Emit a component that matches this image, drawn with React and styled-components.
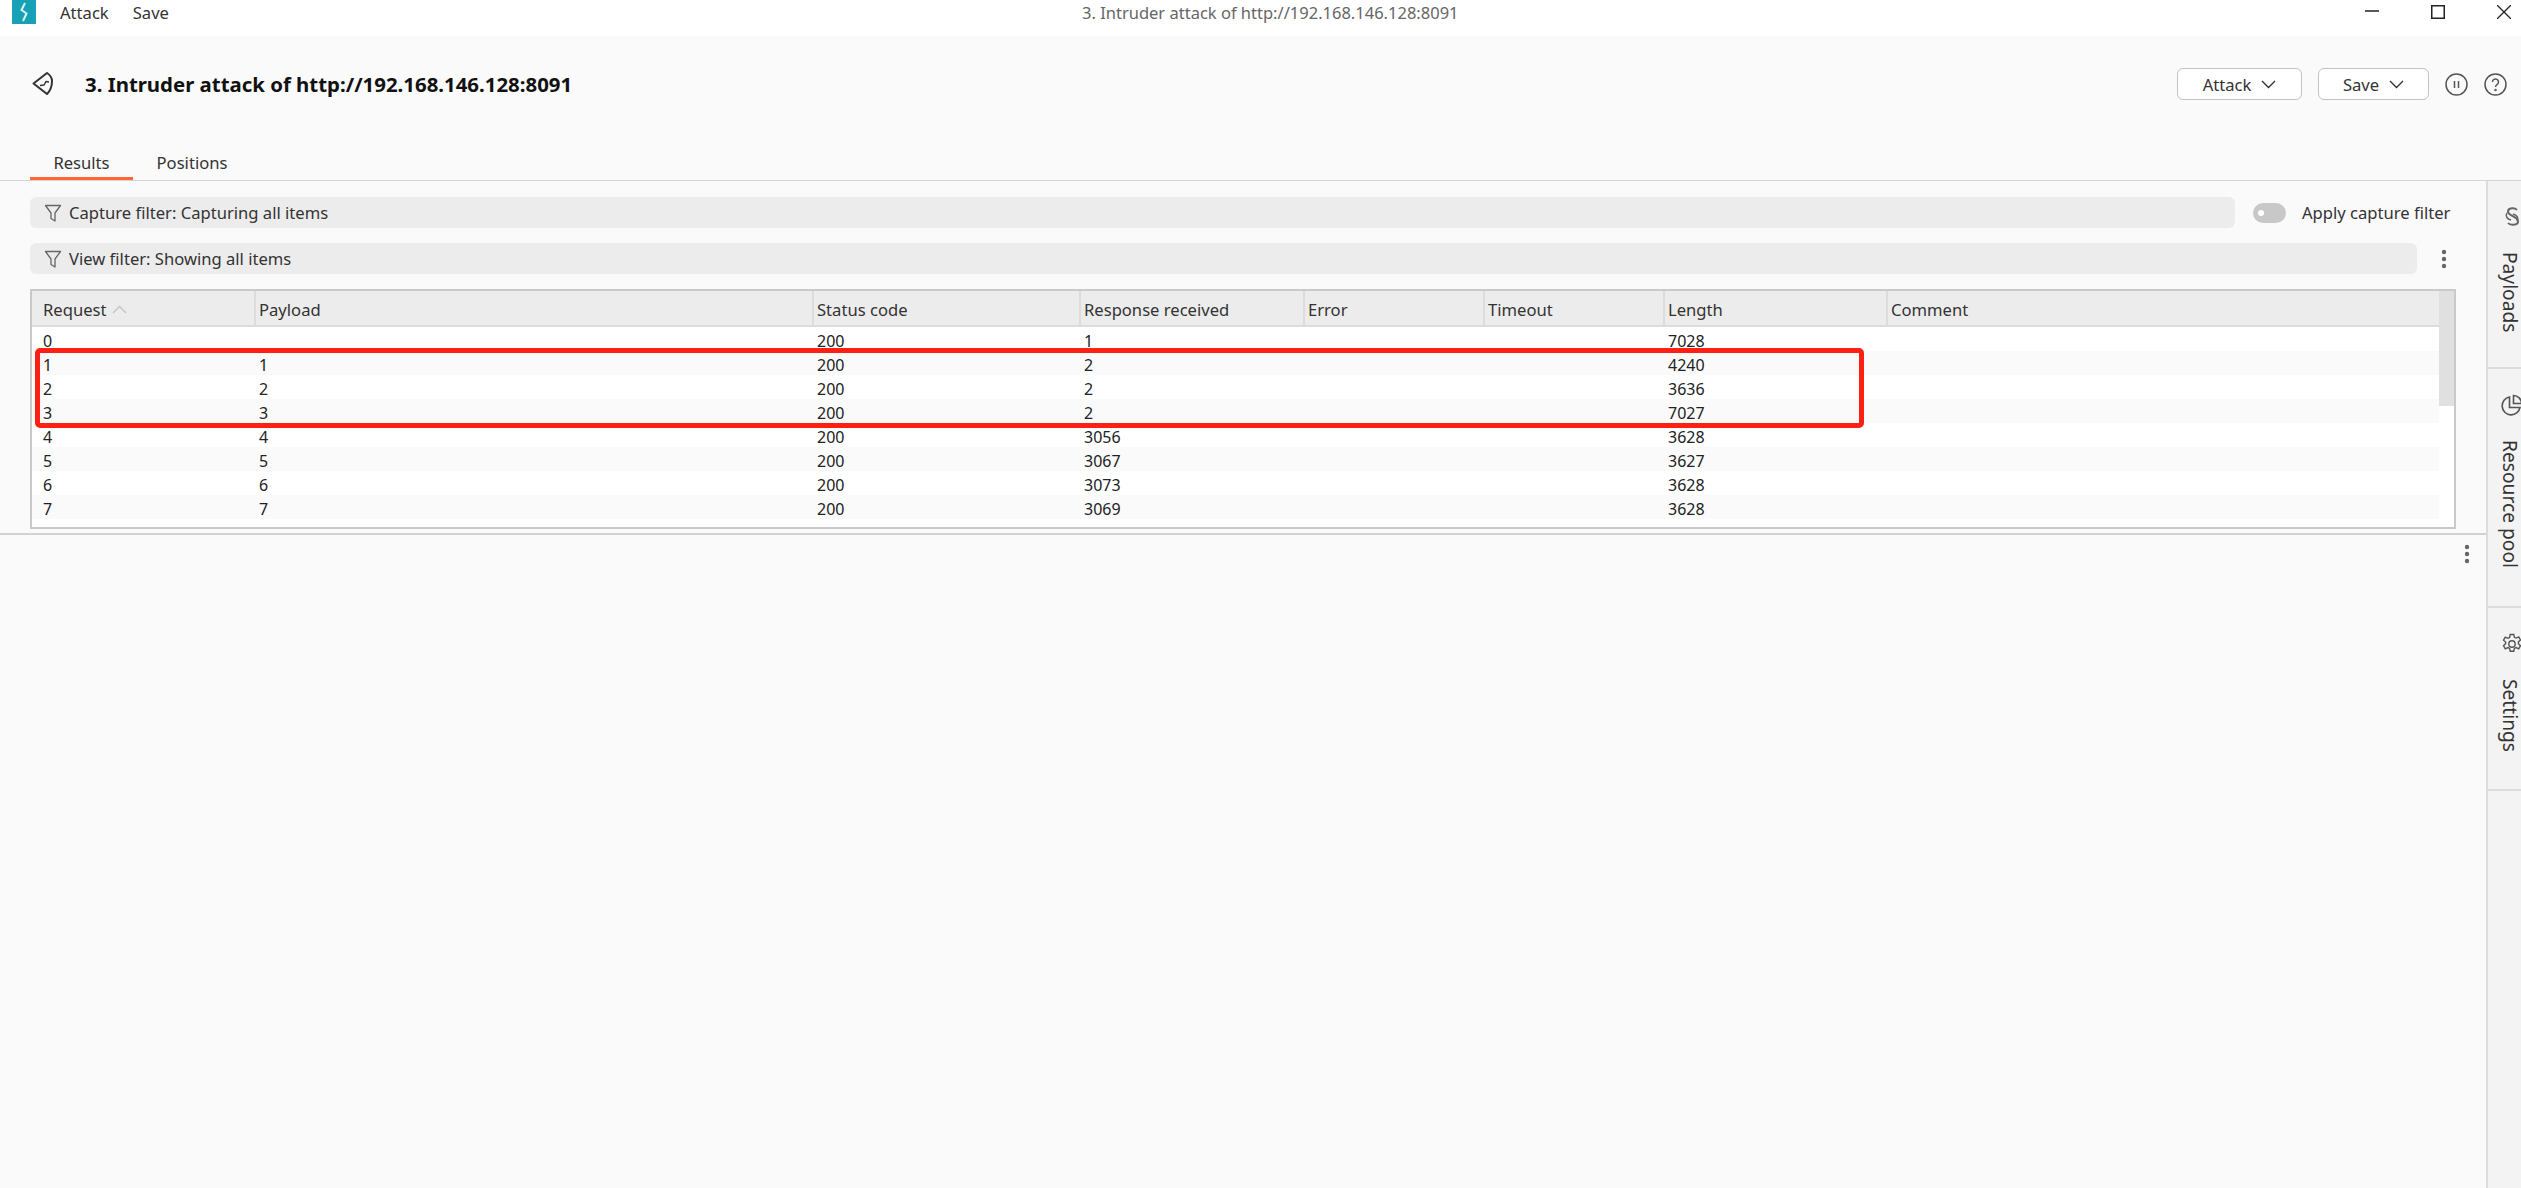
import React from "react";
import styled, { createGlobalStyle } from "styled-components";

const GlobalStyle = createGlobalStyle`
  html, body {
    margin: 0;
    padding: 0;
    background: #fafafa;
    overflow: hidden;
  }
  * {
    box-sizing: border-box;
  }
`;

const Page = styled.div`
  width: 2521px;
  height: 1188px;
  display: flex;
  flex-direction: column;
  overflow: hidden;
  font-family: "Noto Sans", "Open Sans", sans-serif;
  font-size: 16.6px;
  color: #2b2b2b;
  background: #fafafa;
`;

// window title bar
const TitleBar = styled.div`
  height: 36px;
  flex: none;
  background: #fff;
  display: flex;
  align-items: flex-start;
  position: relative;
`;
const Logo = styled.div`
  width: 24px;
  height: 24px;
  margin-left: 12px;
  background: #18a0b5;
  display: flex;
  align-items: center;
  justify-content: center;
`;
const MenuItem = styled.div`
  line-height: 26px;
  color: #333;
  margin-left: 24px;
`;
const WindowTitle = styled.div`
  position: absolute;
  left: 1082px;
  top: 0;
  line-height: 26px;
  font-size: 16.5px;
  color: #666;
`;
const WindowButtons = styled.div`
  margin-left: auto;
  display: flex;
  gap: 52px;
  padding: 5px 10px 0 0;
`;

// attack header
const Header = styled.div`
  height: 144px;
  flex: none;
  position: relative;
`;
const HeaderRow = styled.div`
  height: 32px;
  margin-top: 32px;
  display: flex;
  align-items: center;
  padding-left: 32px;
`;
const AttackTitle = styled.div`
  font-size: 20.4px;
  font-weight: 700;
  color: #111;
  margin-left: 31px;
`;
const HeaderActions = styled.div`
  margin-left: auto;
  display: flex;
  align-items: center;
  padding-right: 14px;
`;
const DropButton = styled.button`
  width: ${(p) => p.$width}px;
  height: 32px;
  margin-right: 16px;
  padding: 0;
  border: 1px solid #c4c2c2;
  border-radius: 6px;
  background: #fff;
  font: inherit;
  color: #333;
  display: flex;
  align-items: center;
  justify-content: center;
  gap: 10px;
`;
const RoundIcon = styled.div`
  width: 23px;
  height: 23px;
  margin-left: ${(p) => p.$left || 0}px;
  display: flex;
`;
const Tabs = styled.div`
  position: absolute;
  left: 30px;
  bottom: 0;
  display: flex;
`;
const Tab = styled.div`
  width: ${(p) => p.$width}px;
  height: 36px;
  line-height: 38px;
  text-align: center;
  color: #333;
  border-bottom: 3px solid ${(p) => (p.$active ? "#ff6633" : "transparent")};
`;

const Body = styled.div`
  flex: 1;
  display: flex;
  border-top: 1px solid #d4d6d6;
  min-height: 0;
`;
const Main = styled.div`
  flex: 1;
  min-width: 0;
  display: flex;
  flex-direction: column;
`;
const ResultsPanel = styled.div`
  height: 354px;
  flex: none;
  padding: 16px 30px 0;
  border-bottom: 2px solid #d2d2d2;
`;
const FilterRow = styled.div`
  height: 31px;
  display: flex;
  align-items: center;
  margin-bottom: 15px;
`;
const FilterBar = styled.div`
  flex: 1;
  height: 31px;
  padding-left: 14px;
  border-radius: 6px;
  background: #ececec;
  display: flex;
  align-items: center;
  gap: 7px;
  color: #333;
`;
const Toggle = styled.div`
  width: 33px;
  height: 20px;
  margin-left: 18px;
  border-radius: 10px;
  background: #c8c8c8;
  position: relative;
  &::after {
    content: "";
    position: absolute;
    left: 5px;
    top: 7px;
    width: 6px;
    height: 6px;
    border-radius: 50%;
    background: #fff;
  }
`;
const ToggleLabel = styled.div`
  width: 154px;
  margin-left: 16px;
  white-space: nowrap;
  color: #333;
`;
const DotsSlot = styled.div`
  width: 39px;
  flex: none;
  padding-left: 15px;
  display: flex;
  justify-content: center;
`;

// results table
const Table = styled.div`
  width: 2426px;
  height: 240px;
  margin-top: 1px;
  border: 2px solid #c9c9c9;
  background: #fff;
  position: relative;
  display: flex;
`;
const TableInner = styled.div`
  flex: 1;
  min-width: 0;
  display: flex;
  flex-direction: column;
`;
const Scrollbar = styled.div`
  width: 15px;
  flex: none;
  background: #fff;
  &::before {
    content: "";
    display: block;
    height: 115px;
    background: #e0e0e0;
  }
`;
const HeaderCells = styled.div`
  height: 36px;
  flex: none;
  display: flex;
  background: #ececec;
  border-bottom: 2px solid #dcdcdc;
`;
const HeadCell = styled.div`
  width: ${(p) => p.$width}px;
  flex: ${(p) => (p.$grow ? 1 : "none")};
  padding-left: ${(p) => (p.$first ? 11 : 3)}px;
  padding-top: 3px;
  border-right: ${(p) => (p.$grow ? "none" : "2px solid #dcdcdc")};
  display: flex;
  align-items: center;
  gap: 6px;
  color: #333;
`;
const Row = styled.div`
  height: 24px;
  flex: none;
  display: flex;
  background: ${(p) => (p.$odd ? "#fafafa" : "#fff")};
`;
const Cell = styled.div`
  width: ${(p) => p.$width}px;
  flex: none;
  padding-left: ${(p) => (p.$first ? 11 : 3)}px;
  font-size: 16px;
  line-height: 28px;
  color: #222;
`;
const Highlight = styled.div`
  position: absolute;
  left: 3px;
  top: 57px;
  width: 1829px;
  height: 80px;
  border: 5px solid #ff2015;
  border-radius: 5px;
  pointer-events: none;
`;

const LowerBar = styled.div`
  display: flex;
  justify-content: flex-end;
  padding: 9px 16px 0 0;
`;

// right side tabs
const Rail = styled.div`
  width: 35px;
  flex: none;
  border-left: 2px solid #dcdcdc;
  background: #f4f3f4;
  overflow: hidden;
  display: flex;
  flex-direction: column;
`;
const RailItem = styled.div`
  height: ${(p) => p.$height}px;
  width: 44px;
  flex: none;
  padding-top: 25px;
  border-bottom: 2px solid #dcdcdc;
  display: flex;
  flex-direction: column;
  align-items: center;
  gap: 24px;
`;
const RailIcon = styled.svg`
  flex: none;
  margin-left: 4px;
`;
const RailLabel = styled.div`
  writing-mode: vertical-rl;
  white-space: nowrap;
  font-size: 19.2px;
  line-height: 18px;
  color: #333;
`;

const columns = [224, 558, 267, 224, 180, 180, 223];

const rows = [
  ["0", "", "200", "1", "", "", "7028"],
  ["1", "1", "200", "2", "", "", "4240"],
  ["2", "2", "200", "2", "", "", "3636"],
  ["3", "3", "200", "2", "", "", "7027"],
  ["4", "4", "200", "3056", "", "", "3628"],
  ["5", "5", "200", "3067", "", "", "3627"],
  ["6", "6", "200", "3073", "", "", "3628"],
  ["7", "7", "200", "3069", "", "", "3628"],
];

const headers = ["Request", "Payload", "Status code", "Response received", "Error", "Timeout", "Length"];

function FilterIcon() {
  return (
    <svg width="18" height="20" viewBox="0 0 18 20" fill="none" stroke="#666" strokeWidth="1.3">
      <path d="M1.5 2.5h15l-5.5 7.5v8l-4-2.5v-5.5z" strokeLinejoin="round" />
    </svg>
  );
}

function Chevron({ color = "#333", up }) {
  return (
    <svg width="15" height="9" viewBox="0 0 15 9" fill="none" stroke={color} strokeWidth="1.4">
      <path d={up ? "M1 8l6.500-6.500L14 8" : "M1 1l6.500 6.500L14 1"} />
    </svg>
  );
}

function Dots() {
  return (
    <svg width="6" height="20" viewBox="0 0 6 20" fill="#666">
      <circle cx="3" cy="3" r="2.2" />
      <circle cx="3" cy="10" r="2.2" />
      <circle cx="3" cy="17" r="2.2" />
    </svg>
  );
}

export default function App() {
  return (
    <Page>
      <GlobalStyle />
      <TitleBar>
        <Logo>
          <svg width="14" height="22" viewBox="0 0 14 22" fill="none" stroke="#d8f3f6" strokeWidth="2">
            <path d="M8 2L4.500 9l5 3.500L6 20" />
          </svg>
        </Logo>
        <MenuItem>Attack</MenuItem>
        <MenuItem>Save</MenuItem>
        <WindowTitle>3. Intruder attack of http://192.168.146.128:8091</WindowTitle>
        <WindowButtons>
          <svg width="14" height="14" viewBox="0 0 14 14" stroke="#222" strokeWidth="1.5" fill="none">
            <path d="M0 6h14" />
          </svg>
          <svg width="14" height="14" viewBox="0 0 14 14" stroke="#222" strokeWidth="1.5" fill="none">
            <rect x="0.75" y="0.75" width="12.5" height="12.5" />
          </svg>
          <svg width="14" height="14" viewBox="0 0 14 14" stroke="#222" strokeWidth="1.3" fill="none">
            <path d="M0 0l14 14M14 0L0 14" />
          </svg>
        </WindowButtons>
      </TitleBar>
      <Header>
        <HeaderRow>
          <svg width="22" height="26" viewBox="0 0 22 26" fill="none" stroke="#333" strokeWidth="2" strokeLinejoin="round">
            <path d="M1.500 12.500L15 2c3 2 5 5 5 8 0 5-2 10-5 13z" />
            <path d="M8 14.500l4-.5 2-3.500 3 .5" strokeWidth="1.500" />
          </svg>
          <AttackTitle>3. Intruder attack of http://192.168.146.128:8091</AttackTitle>
          <HeaderActions>
            <DropButton $width={125}>
              Attack <Chevron />
            </DropButton>
            <DropButton $width={111}>
              Save <Chevron />
            </DropButton>
            <RoundIcon>
              <svg width="23" height="23" viewBox="0 0 23 23" fill="none" stroke="#555" strokeWidth="1.5">
                <circle cx="11.5" cy="11.5" r="10.5" />
                <path d="M9.500 8v7M13.500 8v7" />
              </svg>
            </RoundIcon>
            <RoundIcon $left={16}>
              <svg width="23" height="23" viewBox="0 0 23 23" fill="none" stroke="#555" strokeWidth="1.5">
                <circle cx="11.5" cy="11.5" r="10.5" />
                <path d="M8.500 9a3 3 0 1 1 4.600 2.500c-1 .7-1.600 1.200-1.600 2.500" />
                <circle cx="11.5" cy="17" r="0.5" />
              </svg>
            </RoundIcon>
          </HeaderActions>
        </HeaderRow>
        <Tabs>
          <Tab $width={103} $active>
            Results
          </Tab>
          <Tab $width={118}>Positions</Tab>
        </Tabs>
      </Header>
      <Body>
        <Main>
          <ResultsPanel>
            <FilterRow>
              <FilterBar>
                <FilterIcon />
                Capture filter: Capturing all items
              </FilterBar>
              <Toggle />
              <ToggleLabel>Apply capture filter</ToggleLabel>
            </FilterRow>
            <FilterRow>
              <FilterBar>
                <FilterIcon />
                View filter: Showing all items
              </FilterBar>
              <DotsSlot>
                <Dots />
              </DotsSlot>
            </FilterRow>
            <Table>
              <TableInner>
                <HeaderCells>
                  {headers.map((h, i) => (
                    <HeadCell key={h} $width={columns[i]} $first={i === 0}>
                      {h}
                      {i === 0 && <Chevron color="#c4c4c4" up />}
                    </HeadCell>
                  ))}
                  <HeadCell $grow>Comment</HeadCell>
                </HeaderCells>
                {rows.map((r, i) => (
                  <Row key={r[0]} $odd={i % 2 === 1}>
                    {r.map((v, j) => (
                      <Cell key={j} $width={columns[j]} $first={j === 0}>
                        {v}
                      </Cell>
                    ))}
                  </Row>
                ))}
              </TableInner>
              <Scrollbar />
              <Highlight />
            </Table>
          </ResultsPanel>
          <LowerBar>
            <Dots />
          </LowerBar>
        </Main>
        <Rail>
          <RailItem $height={188}>
            <RailIcon width="22" height="22" viewBox="0 0 22 22" fill="none" stroke="#666" strokeWidth="2">
              <path d="M16 4c-2-2.500-9-2.500-9 1.500 0 4.500 10 5 10 10 0 4-8 4-10 1.500" />
              <path d="M6 7c-2 3 0 6 4 7M16 15c2-3 0-6-4-7" strokeWidth="1.500" />
            </RailIcon>
            <RailLabel>Payloads</RailLabel>
          </RailItem>
          <RailItem $height={239}>
            <RailIcon width="22" height="22" viewBox="0 0 22 22" fill="none" stroke="#555" strokeWidth="1.6">
              <path d="M8.500 3a9 9 0 1 0 10.500 10.500H8.500z" />
              <path d="M12.500 1.500a8 8 0 0 1 8 8h-8z" />
            </RailIcon>
            <RailLabel>Resource pool</RailLabel>
          </RailItem>
          <RailItem $height={183}>
            <RailIcon width="22" height="22" viewBox="0 0 22 22" fill="none" stroke="#555" strokeWidth="1.4">
              <circle cx="11" cy="11" r="3.2" />
              <path d="M9.200 1.500h3.600l.6 2.800 1.700.8 2.600-1.200 1.800 3.100-2.100 1.900v1.900l2.100 1.900-1.800 3.100-2.600-1.200-1.700.8-.6 2.800H9.200l-.6-2.800-1.700-.8-2.600 1.200-1.800-3.100 2.100-1.900V9.100L2.500 7.200l1.800-3.100 2.600 1.200 1.700-.8z" />
            </RailIcon>
            <RailLabel>Settings</RailLabel>
          </RailItem>
        </Rail>
      </Body>
    </Page>
  );
}
